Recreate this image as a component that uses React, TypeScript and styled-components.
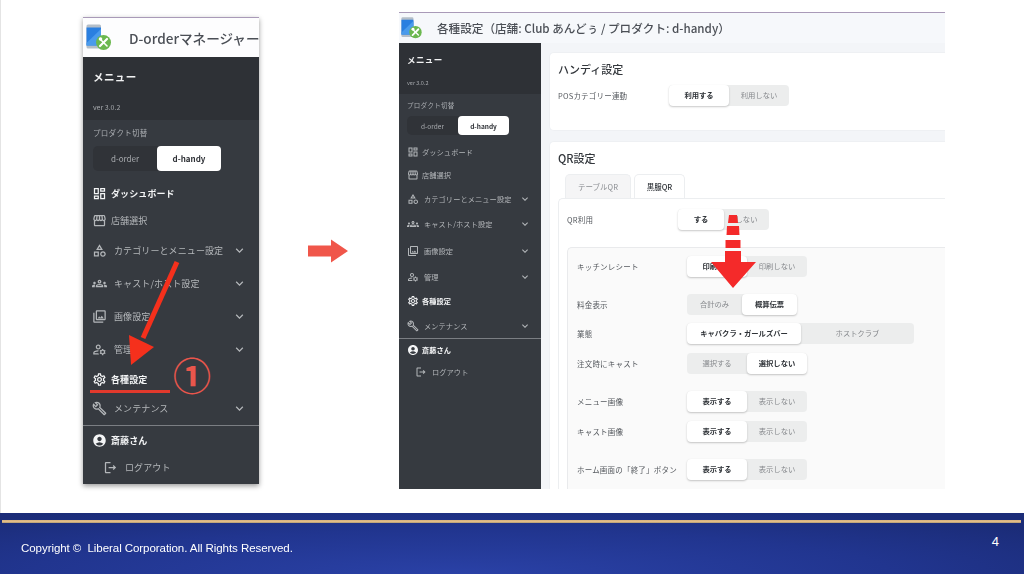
import React from "react";
import styled, { createGlobalStyle } from "styled-components";
import {
  MdOutlineDashboard, MdOutlineStorefront, MdOutlineCategory, MdOutlineGroups,
  MdOutlinePhotoLibrary, MdOutlineManageAccounts, MdOutlineSettings, MdOutlineBuild,
  MdAccountCircle, MdOutlineLogout, MdExpandMore,
} from "react-icons/md";

const Global = createGlobalStyle`
  html, body { margin: 0; padding: 0; background: #fff; }
  body { font-family: "Noto Sans CJK JP", "Noto Sans", sans-serif; }
  * { box-sizing: border-box; }
`;

const Slide = styled.div`
  position: relative; width: 1024px; height: 574px; overflow: hidden;
  display: flex; flex-direction: column; background: #fff;
`;
const Stage = styled.div`
  position: relative; height: 513px; display: flex; align-items: flex-start;
  padding: 12px 0 0 83px; box-shadow: inset 1px 0 0 #e4e4e4;
`;
const Panel = styled.div<{ $w: number; $h: number; $top: number; $shadow?: boolean }>`
  width: ${p => p.$w}px; height: ${p => p.$h}px; margin-top: ${p => p.$top}px;
  flex: none; display: flex; flex-direction: column; overflow: hidden;
  filter: blur(0.45px);
  ${p => p.$shadow ? "box-shadow: 0 2px 5px rgba(0,0,0,.4);" : ""}
`;
const PanelHeader = styled.div<{ $small?: boolean }>`
  height: ${p => (p.$small ? 31 : 40)}px; flex: none; display: flex; align-items: center;
  padding-left: ${p => (p.$small ? 2 : 3)}px;
  border-top: 1px solid #a99ab8;
  background: ${p => (p.$small ? "#f6f8fb" : "#fdfdfe")};
  white-space: nowrap; overflow: hidden;
`;
const HeaderTitle = styled.span<{ $small?: boolean }>`
  margin-left: ${p => (p.$small ? 12 : 14)}px;
  font-size: ${p => (p.$small ? 11.6 : 13.6)}px; font-weight: 500; color: #4b4f56;
`;
const PanelBody = styled.div`
  flex: 1; min-height: 0; display: flex;
`;
const Side = styled.div<{ $small?: boolean }>`
  width: ${p => (p.$small ? 142 : 176)}px; flex: none; background: #363a40;
  display: flex; flex-direction: column;
`;
const SideTop = styled.div<{ $small?: boolean }>`
  height: ${p => (p.$small ? 51 : 63)}px; background: #2e3136;
  padding: ${p => (p.$small ? "9px 0 0 8px" : "12px 0 0 10px")};
  color: #f1f2f3;
`;
const SideTitle = styled.div<{ $small?: boolean }>`
  font-size: ${p => (p.$small ? 8.5 : 10.5)}px; font-weight: 700;
  line-height: ${p => (p.$small ? 14 : 16)}px; letter-spacing: .4px;
`;
const Version = styled.div<{ $small?: boolean }>`
  margin-top: ${p => (p.$small ? 12 : 17)}px; font-size: ${p => (p.$small ? 5.5 : 7)}px;
  line-height: 10px; color: #a5a8ac;
`;
const Switcher = styled.div<{ $small?: boolean }>`
  padding: ${p => (p.$small ? "6px 0 0 8px" : "8px 0 0 10px")};
`;
const SwitchLabel = styled.div<{ $small?: boolean }>`
  font-size: ${p => (p.$small ? 6.5 : 7.5)}px; color: #a9acb0;
  line-height: 10px; letter-spacing: .3px;
`;
const SwitchTrack = styled.div<{ $small?: boolean }>`
  margin-top: ${p => (p.$small ? 6 : 8)}px;
  width: ${p => (p.$small ? 102 : 128)}px; height: ${p => (p.$small ? 19 : 25)}px;
  display: grid; grid-template-columns: 1fr 1fr; background: #303338; border-radius: 5px;
`;
const SwitchBtn = styled.div<{ $on?: boolean; $small?: boolean }>`
  display: flex; align-items: center; justify-content: center;
  font-size: ${p => (p.$small ? 6.5 : 8)}px; border-radius: 4px;
  font-weight: ${p => (p.$on ? 700 : 400)};
  color: ${p => (p.$on ? "#2e3136" : "#a9acb0")};
  background: ${p => (p.$on ? "#fff" : "transparent")};
`;
const NavList = styled.div<{ $top: number }>`
  margin-top: ${p => p.$top}px; display: flex; flex-direction: column;
`;
const NavRow = styled.div<{ $h: number; $small?: boolean; $on?: boolean; $indent?: number }>`
  height: ${p => p.$h}px; display: flex; align-items: center;
  padding: 0 ${p => (p.$small ? 10 : 12)}px 0 ${p => (p.$small ? 8 : 9) + (p.$indent || 0)}px;
  color: ${p => (p.$on ? "#f4f5f6" : "#b4b7ba")};
  font-size: ${p => (p.$small ? 7.2 : 9)}px;
  font-weight: ${p => (p.$on ? 700 : 400)};
  svg.lead { flex: none; font-size: ${p => (p.$small ? 12 : 15)}px; }
`;
const NavText = styled.span<{ $small?: boolean; $wide?: boolean }>`
  margin-left: ${p => (p.$wide ? (p.$small ? 5 : 7) : (p.$small ? 3 : 4))}px;
  flex: 1; white-space: nowrap; letter-spacing: .1px;
`;
const Chevron = styled(MdExpandMore)<{ $small?: boolean }>`
  flex: none; font-size: ${p => (p.$small ? 12 : 15)}px; color: #b4b7ba;
`;
const Divider = styled.div`
  height: 1px; background: #7b7e83;
`;
const Main = styled.div`
  flex: 1; min-width: 0; background: #f3f5f8; padding: 9px 0 0 8px;
  display: flex; flex-direction: column; gap: 10px;
`;
const Card = styled.div<{ $h: number }>`
  height: ${p => p.$h}px; flex: none; background: #fff; border-radius: 5px 0 0 5px;
  padding: 8px 0 0 8px; border: 1px solid #eef0f3; border-right: 0;
`;
const CardTitle = styled.div`
  font-size: 11px; font-weight: 500; line-height: 16px; color: #33373c;
`;
const Row = styled.div<{ $gap: number }>`
  margin-top: ${p => p.$gap}px; display: flex; align-items: center; height: 22px;
`;
const RowLabel = styled.div<{ $w: number }>`
  width: ${p => p.$w}px; flex: none; font-size: 7.5px; color: #55595e; white-space: nowrap; letter-spacing: .2px;
`;
const Segment = styled.div<{ $w: number; $first: number }>`
  width: ${p => p.$w}px; height: 21px; background: #eceded; border-radius: 4px;
  display: grid; grid-template-columns: ${p => p.$first}px 1fr;
`;
const SegBtn = styled.div<{ $on?: boolean }>`
  display: flex; align-items: center; justify-content: center;
  font-size: 7.3px; white-space: nowrap; border-radius: 4px;
  font-weight: ${p => (p.$on ? 700 : 400)};
  color: ${p => (p.$on ? "#2f3338" : "#85888c")};
  background: ${p => (p.$on ? "#fff" : "transparent")};
  box-shadow: ${p => (p.$on ? "0 1px 2px rgba(0,0,0,.22)" : "none")};
`;
const Tabs = styled.div`
  margin-top: 8px; margin-left: 7px; display: flex; gap: 3px; height: 24px;
`;
const Tab = styled.div<{ $on?: boolean; $w: number }>`
  width: ${p => p.$w}px; display: flex; align-items: center; justify-content: center;
  font-size: 7.5px; border-radius: 5px 5px 0 0; border: 1px solid #eceef0; border-bottom: 0;
  color: ${p => (p.$on ? "#2f3338" : "#8b8e92")};
  font-weight: ${p => (p.$on ? 500 : 400)};
  background: ${p => (p.$on ? "#fff" : "#f5f5f6")};
`;
const TabPanel = styled.div`
  border-top: 1px solid #eceef0; border-left: 1px solid #eceef0; border-radius: 5px 0 0 0;
  padding: 9px 0 0 8px;
`;
const InnerBox = styled.div`
  margin-top: 17px; height: 260px; background: #fafafa; border: 1px solid #e9eaec; border-right: 0;
  border-radius: 5px 0 0 5px; padding: 7px 0 0 9px;
`;
const Footer = styled.div`
  position: relative; height: 61px; flex: none; color: #fff; padding: 7px 3px 0 2px;
  background: radial-gradient(ellipse 70% 120% at 45% 100%, #2a41a6 0%, #21358f 60%, #1b2c78 100%);
  font-family: "Liberation Sans", Arial, sans-serif;
`;
const GoldLine = styled.div`
  height: 3px; background: linear-gradient(#d6b27d, #e5c08b 60%, #a8946f);
`;
const FooterRow = styled.div`
  display: flex; justify-content: space-between; align-items: flex-start;
  padding: 12px 22px 0 19px;
`;
const Copyright = styled.div`
  font-size: 11.55px; line-height: 13px; margin-top: 7px; letter-spacing: -.08px; filter: blur(.2px);
`;
const PageNo = styled.div`
  font-size: 13px; line-height: 14px;
`;
const MidArrow = styled.svg`
  width: 40px; height: 24px; flex: none; margin: 227px 51px 0 49px;
`;
const Overlay = styled.svg<{ $x: number; $y: number; $w: number; $h: number }>`
  position: absolute; left: ${p => p.$x}px; top: ${p => p.$y}px;
  width: ${p => p.$w}px; height: ${p => p.$h}px; overflow: visible;
`;
const Circled = styled.div`
  position: absolute; left: 170px; top: 351px; width: 44px; text-align: center;
  font-size: 38px; font-weight: 700; line-height: 46px; color: #e9564c; font-family: "Noto Sans CJK JP", sans-serif;
`;
const Underline = styled.div`
  position: absolute; left: 90px; top: 390px; width: 80px; height: 3px; background: #e2392c;
`;

const Logo: React.FC<{ size: number }> = ({ size }) => (
  <svg width={size} height={size} viewBox="0 0 29 29" style={{ flex: "none" }}>
    <rect x="0.5" y="1.5" width="14.5" height="24" rx="1.5" fill="#b4bec8" />
    <rect x="0.5" y="4.5" width="14.5" height="18" fill="#2a7fe0" />
    <path d="M0.5 20 L15 6 V22.5 H0.5 Z" fill="#4a9bec" />
    <circle cx="17.5" cy="19.5" r="7.5" fill="#6bb84f" />
    <path d="M14 23 L21 16" stroke="#fff" strokeWidth="2.2" strokeLinecap="round" />
    <path d="M14 16 L21 23" stroke="#fff" strokeWidth="1.6" strokeLinecap="round" />
    <circle cx="14.5" cy="16" r="1.8" fill="#fff" />
  </svg>
);

const labels: [React.ElementType, string, boolean, boolean][] = [
  [MdOutlineDashboard, "ダッシュボード", false, false],
  [MdOutlineStorefront, "店舗選択", false, false],
  [MdOutlineCategory, "カテゴリーとメニュー設定", true, true],
  [MdOutlineGroups, "キャスト/ホスト設定", true, true],
  [MdOutlinePhotoLibrary, "画像設定", true, true],
  [MdOutlineManageAccounts, "管理", true, true],
  [MdOutlineSettings, "各種設定", false, false],
  [MdOutlineBuild, "メンテナンス", true, true],
];

const Sidebar: React.FC<{ small?: boolean; heights: number[]; navTop: number; userH: number[]; onIdx: number[] }> = ({ small, heights, navTop, userH, onIdx }) => (
  <Side $small={small}>
    <SideTop $small={small}>
      <SideTitle $small={small}>メニュー</SideTitle>
      <Version $small={small}>ver 3.0.2</Version>
    </SideTop>
    <Switcher $small={small}>
      <SwitchLabel $small={small}>プロダクト切替</SwitchLabel>
      <SwitchTrack $small={small}>
        <SwitchBtn $small={small}>d-order</SwitchBtn>
        <SwitchBtn $small={small} $on>d-handy</SwitchBtn>
      </SwitchTrack>
    </Switcher>
    <NavList $top={navTop}>
      {labels.map(([Icon, label, chev, wide], i) => (
        <NavRow key={label} $h={heights[i]} $small={small} $on={onIdx.includes(i)}>
          <Icon className="lead" />
          <NavText $small={small} $wide={wide}>{label}</NavText>
          {chev && <Chevron $small={small} />}
        </NavRow>
      ))}
      <Divider />
      <NavRow $h={userH[0]} $small={small} $on>
        <MdAccountCircle className="lead" />
        <NavText $small={small}>斎藤さん</NavText>
      </NavRow>
      <NavRow $h={userH[1]} $small={small} $indent={small ? 8 : 11}>
        <MdOutlineLogout className="lead" />
        <NavText $small={small} $wide>ログアウト</NavText>
      </NavRow>
    </NavList>
  </Side>
);

const Seg: React.FC<{ a: string; b: string; on: 0 | 1; w?: number; first?: number }> = ({ a, b, on, w = 120, first = 60 }) => (
  <Segment $w={w} $first={first}>
    <SegBtn $on={on === 0}>{a}</SegBtn>
    <SegBtn $on={on === 1}>{b}</SegBtn>
  </Segment>
);

const settings: { label: string; gap: number; a: string; b: string; on: 0 | 1; w?: number; first?: number }[] = [
  { label: "キッチンレシート", gap: 0, a: "印刷する", b: "印刷しない", on: 0 },
  { label: "料金表示", gap: 16, a: "合計のみ", b: "概算伝票", on: 1, w: 110, first: 55 },
  { label: "業態", gap: 7, a: "キャバクラ・ガールズバー", b: "ホストクラブ", on: 0, w: 227, first: 114 },
  { label: "注文時にキャスト", gap: 8, a: "選択する", b: "選択しない", on: 1 },
  { label: "メニュー画像", gap: 16, a: "表示する", b: "表示しない", on: 0 },
  { label: "キャスト画像", gap: 8, a: "表示する", b: "表示しない", on: 0 },
  { label: "ホーム画面の「終了」ボタン", gap: 16, a: "表示する", b: "表示しない", on: 0 },
];

export default function App() {
  return (
    <Slide>
      <Global />
      <Stage>
        <Panel $w={176} $h={467} $top={5} $shadow>
          <PanelHeader>
            <Logo size={29} />
            <HeaderTitle>D-orderマネージャー</HeaderTitle>
          </PanelHeader>
          <PanelBody>
            <Sidebar
              heights={[26, 28, 33, 33, 33, 33, 26, 33]}
              navTop={9}
              userH={[28, 26]}
              onIdx={[0, 6]}
            />
          </PanelBody>
        </Panel>
        <MidArrow viewBox="0 0 40 24">
          <path d="M0 6.5 H23 V0.5 L40 12 L23 23.5 V17.5 H0 Z" fill="#f0564a" />
        </MidArrow>
        <Panel $w={546} $h={477} $top={0}>
          <PanelHeader $small>
            <Logo size={24} />
            <HeaderTitle $small>各種設定（店舗: Club あんどぅ / プロダクト: d-handy）</HeaderTitle>
          </PanelHeader>
          <PanelBody>
            <Sidebar
              small
              heights={[22, 24, 24, 26, 27, 25, 24, 25]}
              navTop={6}
              userH={[22, 22]}
              onIdx={[6]}
            />
            <Main>
              <Card $h={79}>
                <CardTitle>ハンディ設定</CardTitle>
                <Row $gap={7}>
                  <RowLabel $w={111}>POSカテゴリー連動</RowLabel>
                  <Seg a="利用する" b="利用しない" on={0} />
                </Row>
              </Card>
              <Card $h={360}>
                <CardTitle>QR設定</CardTitle>
                <Tabs>
                  <Tab $w={66}>テーブルQR</Tab>
                  <Tab $w={51} $on>黒服QR</Tab>
                </Tabs>
                <TabPanel>
                  <Row $gap={0}>
                    <RowLabel $w={111}>QR利用</RowLabel>
                    <Seg a="する" b="しない" on={0} w={91} first={46} />
                  </Row>
                  <InnerBox>
                    {settings.map(s => (
                      <Row key={s.label} $gap={s.gap}>
                        <RowLabel $w={110}>{s.label}</RowLabel>
                        <Seg a={s.a} b={s.b} on={s.on} w={s.w} first={s.first} />
                      </Row>
                    ))}
                  </InnerBox>
                </TabPanel>
              </Card>
            </Main>
          </PanelBody>
        </Panel>

        <Overlay $x={125} $y={260} $w={60} $h={110} viewBox="0 0 60 110">
          <path d="M52 2 L18 78" stroke="#f5301c" strokeWidth="5" />
          <path d="M6 105 L4 75 L29 87 Z" fill="#f5301c" />
        </Overlay>
        <Underline />
        <Circled>①</Circled>
        <Overlay $x={705} $y={212} $w={56} $h={80} viewBox="0 0 56 80">
          <path d="M24 3 H32 L33 11 H23 Z" fill="#f42a2a" />
          <path d="M22 14 H34 L34.5 23 H21.5 Z" fill="#f42a2a" />
          <path d="M20.5 28 H35.5 V36 H20.5 Z" fill="#f42a2a" />
          <path d="M20 39 H36 V50 H51 L28 76 L6 50 H20 Z" fill="#f42a2a" />
        </Overlay>
      </Stage>
      <Footer>
        <GoldLine />
        <FooterRow>
          <Copyright>Copyright ©&nbsp; Liberal Corporation. All Rights Reserved.</Copyright>
          <PageNo>4</PageNo>
        </FooterRow>
      </Footer>
    </Slide>
  );
}
